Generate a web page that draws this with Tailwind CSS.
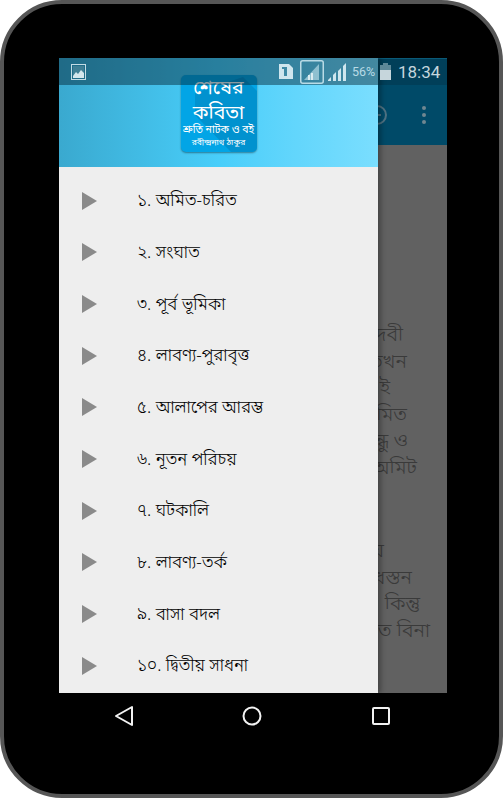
<!DOCTYPE html>
<html lang="bn">

<head>
  <meta charset="UTF-8">
  <meta name="viewport" content="width=device-width, initial-scale=1.0">
  <title>শেষের কবিতা</title>
  <script src="https://cdn.jsdelivr.net/npm/@tailwindcss/browser@4"></script>
</head>

<body class="bg-white">
  <!-- tablet frame -->
  <div class="h-[798px] w-[503px] rounded-[62px] border-[4px] border-[#565656] bg-black pt-[54px] pl-[55px] font-['Noto_Sans_Bengali','Lohit_Bengali','FreeSans','Noto_Sans',sans-serif]">
    <div class="relative h-[635px] w-[388px] overflow-hidden bg-[#616161]">

      <!-- app behind the drawer -->
      <div class="h-[27px] bg-[#013f59] border-t border-[#0a5a78]"></div>
      <div class="flex h-[60px] items-center justify-end bg-[#004a68] pr-[21px]">
        <div class="mr-[35px] flex h-[20px] w-[20px] items-center justify-center rounded-full border-2 border-[#4f7282]">
          <div class="h-[2px] w-[8px] bg-[#4f7282]"></div>
        </div>
        <div class="flex flex-col gap-[3px]">
          <div class="h-[4px] w-[4px] rounded-full bg-[#6f8791]"></div>
          <div class="h-[4px] w-[4px] rounded-full bg-[#6f8791]"></div>
          <div class="h-[4px] w-[4px] rounded-full bg-[#6f8791]"></div>
        </div>
      </div>
      <div class="flex flex-col pt-[178px] text-[20px] leading-[26.5px] font-light text-[#3a3a3a]">
        <div class="flex w-[344px] justify-end whitespace-nowrap">দেবী</div>
        <div class="flex w-[348px] justify-end whitespace-nowrap">তখন</div>
        <div class="flex w-[331px] justify-end whitespace-nowrap">এই</div>
        <div class="flex w-[348px] justify-end whitespace-nowrap">অমিত</div>
        <div class="flex w-[349px] justify-end whitespace-nowrap">বন্ধু ও</div>
        <div class="flex w-[358px] justify-end whitespace-nowrap">অমিট</div>
        <div class="h-[57px]"></div>
        <div class="flex w-[325px] justify-end whitespace-nowrap">য</div>
        <div class="flex w-[353px] justify-end whitespace-nowrap">অধস্তন</div>
        <div class="flex w-[361px] justify-end whitespace-nowrap">। কিন্তু</div>
        <div class="flex w-[371px] justify-end whitespace-nowrap">ত বিনা</div>
      </div>

      <!-- drawer -->
      <div class="absolute inset-y-0 left-0 w-[319px] bg-[#eeeeee] shadow-[3px_0_5px_rgba(0,0,0,0.3)]">
        <div class="flex h-[109px] justify-center bg-gradient-to-r from-[#3aa9cf] via-[#48cefa] to-[#7adefe] pt-[17px]">
          <div class="relative h-[77px] w-[76px] overflow-hidden rounded-[5px] bg-[#02a5e6] text-center text-white shadow-[0_1px_2px_rgba(0,0,0,0.4)]">
            <svg class="absolute inset-0" width="76" height="77" viewBox="0 0 76 77">
              <polygon points="14,18 62,2 76,16 76,77 50,77 14,40" fill="#0192cf" />
            </svg>
            <div class="relative text-[19.5px] leading-[29px] whitespace-nowrap">শেষের</div>
            <div class="relative text-[19.5px] leading-[21px] whitespace-nowrap">কবিতা</div>
            <div class="relative mt-[1px] text-[10.5px] leading-[8px] whitespace-nowrap">শ্রুতি নাটক ও বই</div>
            <div class="relative mt-[3px] text-[8.5px] leading-[11px] whitespace-nowrap">রবীন্দ্রনাথ ঠাকুর</div>
          </div>
        </div>

        <ul class="pt-[8px] text-[17px] leading-[26px] font-light text-black">
          <li class="flex h-[51.67px] items-center pl-[23px]"><svg class="mr-[40px] shrink-0" width="15" height="18" viewBox="0 0 15 18"><polygon points="0,0 15,9 0,18" fill="#8a8a8a" /></svg><span class="pt-[3px]">১. অমিত-চরিত</span></li>
          <li class="flex h-[51.67px] items-center pl-[23px]"><svg class="mr-[40px] shrink-0" width="15" height="18" viewBox="0 0 15 18"><polygon points="0,0 15,9 0,18" fill="#8a8a8a" /></svg><span class="pt-[3px]">২. সংঘাত</span></li>
          <li class="flex h-[51.67px] items-center pl-[23px]"><svg class="mr-[40px] shrink-0" width="15" height="18" viewBox="0 0 15 18"><polygon points="0,0 15,9 0,18" fill="#8a8a8a" /></svg><span class="pt-[3px]">৩. পূর্ব ভূমিকা</span></li>
          <li class="flex h-[51.67px] items-center pl-[23px]"><svg class="mr-[40px] shrink-0" width="15" height="18" viewBox="0 0 15 18"><polygon points="0,0 15,9 0,18" fill="#8a8a8a" /></svg><span class="pt-[3px]">৪. লাবণ্য-পুরাবৃত্ত</span></li>
          <li class="flex h-[51.67px] items-center pl-[23px]"><svg class="mr-[40px] shrink-0" width="15" height="18" viewBox="0 0 15 18"><polygon points="0,0 15,9 0,18" fill="#8a8a8a" /></svg><span class="pt-[3px]">৫. আলাপের আরম্ভ</span></li>
          <li class="flex h-[51.67px] items-center pl-[23px]"><svg class="mr-[40px] shrink-0" width="15" height="18" viewBox="0 0 15 18"><polygon points="0,0 15,9 0,18" fill="#8a8a8a" /></svg><span class="pt-[3px]">৬. নূতন পরিচয়</span></li>
          <li class="flex h-[51.67px] items-center pl-[23px]"><svg class="mr-[40px] shrink-0" width="15" height="18" viewBox="0 0 15 18"><polygon points="0,0 15,9 0,18" fill="#8a8a8a" /></svg><span class="pt-[3px]">৭. ঘটকালি</span></li>
          <li class="flex h-[51.67px] items-center pl-[23px]"><svg class="mr-[40px] shrink-0" width="15" height="18" viewBox="0 0 15 18"><polygon points="0,0 15,9 0,18" fill="#8a8a8a" /></svg><span class="pt-[3px]">৮. লাবণ্য-তর্ক</span></li>
          <li class="flex h-[51.67px] items-center pl-[23px]"><svg class="mr-[40px] shrink-0" width="15" height="18" viewBox="0 0 15 18"><polygon points="0,0 15,9 0,18" fill="#8a8a8a" /></svg><span class="pt-[3px]">৯. বাসা বদল</span></li>
          <li class="flex h-[51.67px] items-center pl-[23px]"><svg class="mr-[40px] shrink-0" width="15" height="18" viewBox="0 0 15 18"><polygon points="0,0 15,9 0,18" fill="#8a8a8a" /></svg><span class="pt-[3px]">১০. দ্বিতীয় সাধনা</span></li>
        </ul>
      </div>

      <!-- status bar, lies over the drawer -->
      <div class="absolute inset-x-0 top-0 flex h-[27px] items-center font-['Roboto',sans-serif]">
        <div class="absolute inset-y-0 left-0 w-[319px] bg-[#00202e]/45"></div>
        <svg class="relative ml-[12px]" width="15" height="16" viewBox="0 0 15 16">
          <rect x="0.5" y="0.5" width="14" height="15" fill="none" stroke="#c3dce5" />
          <rect x="2" y="2" width="11" height="12" fill="#3f7f95" />
          <polygon points="2,12 5,8 7,10 10,6 13,9 13,14 2,14" fill="#d3e6ec" />
        </svg>
        <svg class="relative ml-[193px]" width="14" height="15" viewBox="0 0 14 15">
          <polygon points="0,0 10,0 14,4 14,15 0,15" fill="#cfe6ee" />
          <rect x="5" y="3" width="3" height="9" fill="#3f8aa5" />
          <rect x="3" y="3" width="3" height="2" fill="#3f8aa5" />
        </svg>
        <svg class="relative ml-[7px]" width="24" height="24" viewBox="0 0 24 24">
          <rect x="0.75" y="0.75" width="22.5" height="22.5" rx="2" fill="none" stroke="#b9dbe6" stroke-width="1.5" />
          <polygon points="19,4 19,20 4,20" fill="#8fc0d0" />
          <rect x="8" y="15" width="2" height="5" fill="#dcecf1" />
          <rect x="11" y="13" width="2" height="7" fill="#dcecf1" />
        </svg>
        <svg class="relative ml-[4px]" width="19" height="18" viewBox="0 0 19 18">
          <polygon points="0,18 3,18 3,14 0,17" fill="#cfe6ee" />
          <polygon points="5,18 8,18 8,9 5,12" fill="#cfe6ee" />
          <polygon points="10,18 13,18 13,5 10,8" fill="#cfe6ee" />
          <polygon points="15,18 18,18 18,0 15,3" fill="#cfe6ee" />
        </svg>
        <span class="relative ml-[5px] w-[24px] pt-[2px] text-[12.5px] leading-none whitespace-nowrap text-[#b8dbe6]">56%</span>
        <svg class="relative ml-[4px]" width="11" height="17" viewBox="0 0 11 17">
          <rect x="3" y="0" width="5" height="2" fill="#5d8797" />
          <rect x="0" y="2" width="11" height="5" fill="#5d8797" />
          <rect x="0" y="7" width="11" height="10" fill="#c6d6dc" />
        </svg>
        <span class="relative ml-[7px] pt-[2px] text-[17px] leading-none whitespace-nowrap text-[#c5d6dd]">18:34</span>
      </div>
    </div>

    <!-- navigation keys -->
    <div class="flex h-[46px] items-center">
      <svg class="ml-[55px]" width="20" height="22" viewBox="0 0 20 22">
        <polygon points="18,2 18,20 2,11" fill="none" stroke="#f2f2f2" stroke-width="2" stroke-linejoin="round" />
      </svg>
      <svg class="ml-[108px]" width="20" height="20" viewBox="0 0 20 20">
        <circle cx="10" cy="10" r="8.5" fill="none" stroke="#f2f2f2" stroke-width="2" />
      </svg>
      <svg class="ml-[110px]" width="18" height="18" viewBox="0 0 18 18">
        <rect x="1" y="1" width="16" height="16" rx="1" fill="none" stroke="#f2f2f2" stroke-width="2" />
      </svg>
    </div>
  </div>
</body>

</html>
